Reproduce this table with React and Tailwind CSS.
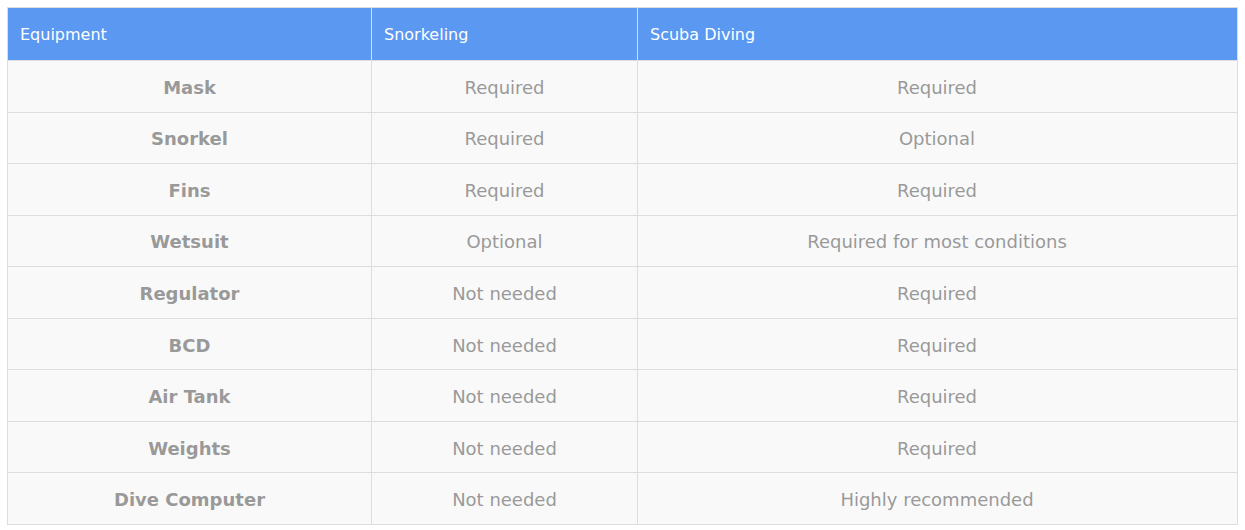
const rows = [
  ["Mask", "Required", "Required"],
  ["Snorkel", "Required", "Optional"],
  ["Fins", "Required", "Required"],
  ["Wetsuit", "Optional", "Required for most conditions"],
  ["Regulator", "Not needed", "Required"],
  ["BCD", "Not needed", "Required"],
  ["Air Tank", "Not needed", "Required"],
  ["Weights", "Not needed", "Required"],
  ["Dive Computer", "Not needed", "Highly recommended"],
];

export default function App() {
  return (
    <div className="bg-white min-h-[530px] p-[7px] font-['DejaVu_Sans',sans-serif]">
      <table className="w-[1230px] border-collapse border border-[#dddddd] table-fixed">
        <colgroup>
          <col className="w-[364px]" />
          <col className="w-[266px]" />
          <col className="w-[600px]" />
        </colgroup>
        <thead>
          <tr className="h-[53px] bg-[#5b98f1] text-white text-[16px]">
            <th className="border border-[#dddddd] px-3 pt-[2px] text-left font-normal">Equipment</th>
            <th className="border border-[#dddddd] px-3 pt-[2px] text-left font-normal">Snorkeling</th>
            <th className="border border-[#dddddd] px-3 pt-[2px] text-left font-normal">Scuba Diving</th>
          </tr>
        </thead>
        <tbody className="bg-[#f9f9f9] text-[#999999] text-[18px]">
          {rows.map((r) => (
            <tr key={r[0]} className="h-[51.56px]">
              <td className="border border-[#dddddd] pt-[2px] text-center font-bold">{r[0]}</td>
              <td className="border border-[#dddddd] pt-[2px] text-center">{r[1]}</td>
              <td className="border border-[#dddddd] pt-[2px] pr-[1px] text-center">{r[2]}</td>
            </tr>
          ))}
        </tbody>
      </table>
    </div>
  );
}
